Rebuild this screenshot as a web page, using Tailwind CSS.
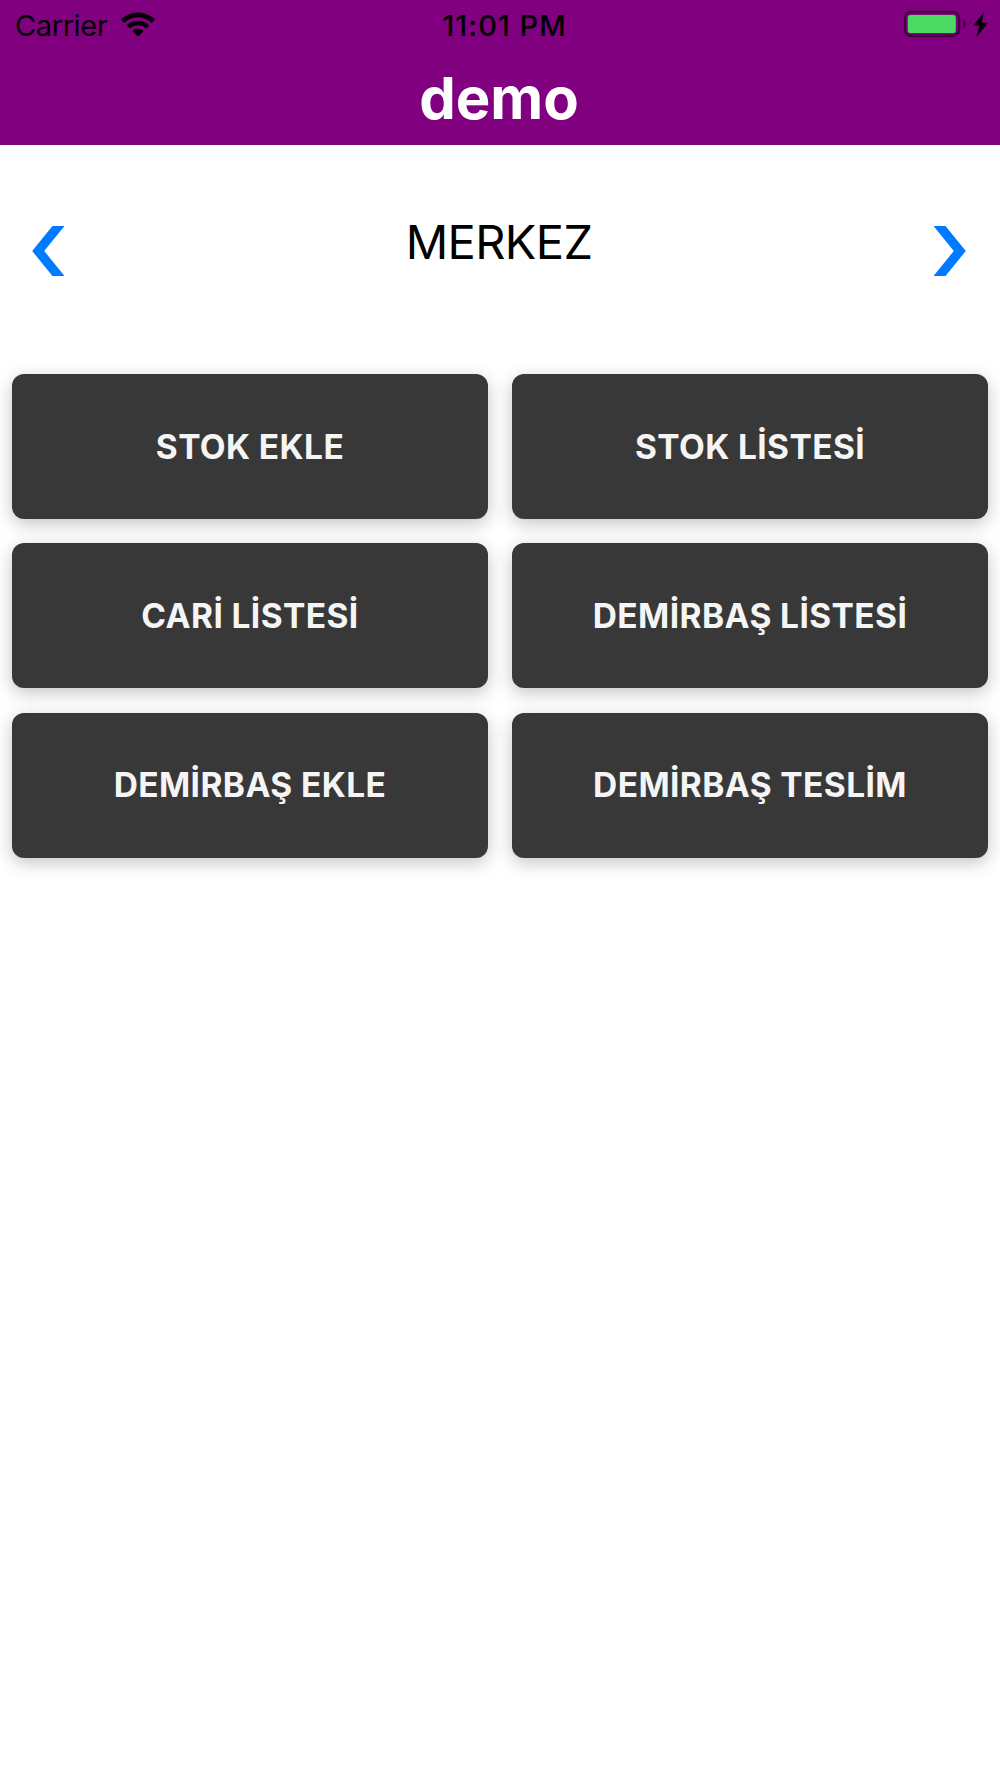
<!DOCTYPE html>
<html lang="tr">
<head>
    <meta charset="UTF-8">
    <meta name="viewport" content="width=device-width, initial-scale=1.0">
    <title>demo</title>
    <script src="https://cdn.jsdelivr.net/npm/@tailwindcss/browser@4"></script>
</head>
<body class="bg-white min-h-screen font-['Inter',sans-serif] text-black">
    <!-- Header -->
    <header class="bg-[#800080] h-[145px]">
        <!-- Status bar -->
        <div class="grid grid-cols-3 items-center h-[50px] pl-[15px] pr-[11px]">
            <div class="flex items-center gap-[14px]">
                <span class="text-[29px] leading-[50px] pt-px tracking-[-0.4px]">Carrier</span>
                <svg class="w-[34px] h-[25px] -mt-[2px]" viewBox="0 0 34 25">
                    <path d="M0 7.6 A24 24 0 0 1 34 7.6 L30.7 10.9 A19.4 19.4 0 0 0 3.3 10.9 Z" />
                    <path d="M5.8 13.4 A16 16 0 0 1 28.2 13.4 L25 16.6 A11.4 11.4 0 0 0 9 16.6 Z" />
                    <path d="M11.4 18.9 A8 8 0 0 1 22.6 18.9 L17 24.5 Z" />
                </svg>
            </div>
            <span class="text-center text-[29px] leading-[50px] pt-px font-medium tracking-[1px] pl-[5px]">11:01 PM</span>
            <div class="flex items-center justify-end">
                <svg class="w-[86px] h-[28px] -mt-[3px]" viewBox="0 0 86 28">
                    <rect x="2" y="2" width="54" height="24" rx="6" fill="none" stroke="#000" stroke-opacity=".5" stroke-width="2.4" />
                    <rect x="4.8" y="5" width="48" height="18" rx="2.8" fill="#4cd964" />
                    <path d="M60 9.5 A5 5 0 0 1 60 18.7 Z" fill="#000" fill-opacity=".5" />
                    <path d="M81 2 L70.3 15.5 H76.4 L73.3 27.5 L85 12.8 H78.8 Z" />
                </svg>
            </div>
        </div>
        <h1 class="text-center text-white text-[58px] leading-[96px] font-bold pr-[2px]">demo</h1>
    </header>

    <!-- Branch selector -->
    <section class="flex items-start justify-between pl-8 pr-[34px] pt-[81px] h-[229.3px]">
        <button aria-label="Önceki">
            <svg class="w-[33px] h-[50px]" viewBox="0 0 33 50" fill="#007aff">
                <path d="M20.5 0 H32.5 L12.2 25 L32.5 50 H20.5 L0.2 25 Z" />
            </svg>
        </button>
        <span class="text-[47px] leading-8 tracking-[-0.6px]">MERKEZ</span>
        <button aria-label="Sonraki">
            <svg class="w-[33px] h-[50px]" viewBox="0 0 33 50" fill="#007aff">
                <path d="M12.5 0 H0.5 L20.8 25 L0.5 50 H12.5 L32.8 25 Z" />
            </svg>
        </button>
    </section>

    <!-- Menu -->
    <main class="grid grid-cols-2 gap-x-6 gap-y-[24.15px] px-3 text-[33.5px] font-bold tracking-[0.4px] text-[#f5f5f5]">
        <button class="h-[145px] rounded-xl bg-[#383838] shadow-[0_5px_18px_rgba(0,0,0,0.23)]">STOK EKLE</button>
        <button class="h-[145px] rounded-xl bg-[#383838] shadow-[0_5px_18px_rgba(0,0,0,0.23)]">STOK LİSTESİ</button>
        <button class="h-[145px] rounded-xl bg-[#383838] shadow-[0_5px_18px_rgba(0,0,0,0.23)]">CARİ LİSTESİ</button>
        <button class="h-[145px] rounded-xl bg-[#383838] shadow-[0_5px_18px_rgba(0,0,0,0.23)]">DEMİRBAŞ LİSTESİ</button>
        <button class="h-[145px] rounded-xl bg-[#383838] shadow-[0_5px_18px_rgba(0,0,0,0.23)]">DEMİRBAŞ EKLE</button>
        <button class="h-[145px] rounded-xl bg-[#383838] shadow-[0_5px_18px_rgba(0,0,0,0.23)]">DEMİRBAŞ TESLİM</button>
    </main>
</body>
</html>
